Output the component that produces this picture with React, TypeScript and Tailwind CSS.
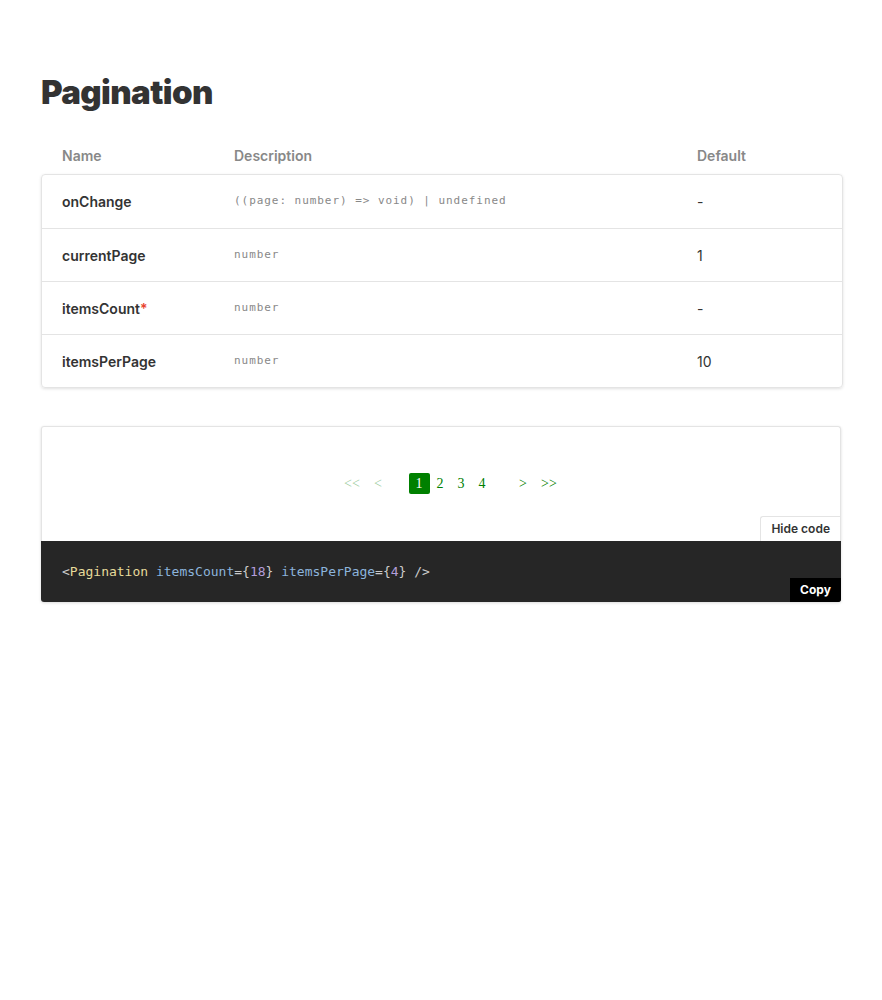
import React from "react";

const rows = [
  { name: "onChange", req: false, type: "((page: number) => void) | undefined", def: "-" },
  { name: "currentPage", req: false, type: "number", def: "1" },
  { name: "itemsCount", req: true, type: "number", def: "-" },
  { name: "itemsPerPage", req: false, type: "number", def: "10" },
];

const sans = "font-['Inter','Noto_Sans',sans-serif]";
const mono = "font-['DejaVu_Sans_Mono','Liberation_Mono',monospace]";

export default function App() {
  return (
    <div className={`min-h-[1000px] bg-white ${sans} text-[#333]`}>
      <div className="px-[41px] pt-[72px] w-[883px]">
        <h1 className="text-[33px] leading-[40px] font-black text-[#333] tracking-[-0.6px]">Pagination</h1>

        <div className="mt-[28px]">
          <div className="flex h-[30px] items-center text-[14px] font-semibold text-[#888] pl-[21px]">
            <div className="w-[172px]">Name</div>
            <div className="w-[463px]">Description</div>
            <div>Default</div>
          </div>
          <div className="mt-[4px] border border-[#e4e4e4] rounded-[4px] shadow-[0_1px_3px_rgba(0,0,0,0.12)] w-[802px]">
            {rows.map((r, i) => (
              <div
                key={r.name}
                className={`flex items-center h-[53px] pl-[20px] ${i > 0 ? "border-t border-[#e4e4e4]" : ""}`}
              >
                <div className="w-[172px] text-[14px] font-semibold text-[#333]">
                  {r.name}
                  {r.req && <span className="text-[#e8432d]">*</span>}
                </div>
                <div className={`w-[463px] ${mono} text-[11px] tracking-[0.95px] text-[#888]`}>{r.type}</div>
                <div className="text-[14px] text-[#333]">{r.def}</div>
              </div>
            ))}
          </div>
        </div>

        <div className="mt-[38px] w-[800px] rounded-[3px] shadow-[0_1px_3px_rgba(0,0,0,0.15)]">
          <div className="border border-[#e4e4e4] border-b-0 rounded-t-[3px] bg-white">
            <div className="flex justify-center pt-[46px] h-[89px] pl-[19px]">
              <div className="flex items-center h-[21px] font-['Liberation_Serif',serif] text-[14px] text-[#008000]">
                <span className="w-[21px] text-center opacity-40">&lt;&lt;</span>
                <span className="w-[21px] ml-[5px] text-center opacity-40">&lt;</span>
                <span className="w-[21px] h-[21px] ml-[20px] bg-[#008000] text-white rounded-[2px] flex items-center justify-center">1</span>
                <span className="w-[21px] text-center">2</span>
                <span className="w-[21px] text-center">3</span>
                <span className="w-[21px] text-center">4</span>
                <span className="w-[21px] ml-[20px] text-center">&gt;</span>
                <span className="w-[21px] ml-[5px] text-center">&gt;&gt;</span>
              </div>
            </div>
            <div className="flex justify-end h-[25px]">
              <div className="h-[25px] px-[10px] border border-[#e4e4e4] border-r-0 border-b-0 rounded-tl-[3px] text-[12px] font-semibold text-[#333] flex items-center bg-white">
                Hide code
              </div>
            </div>
          </div>
          <div className="bg-[#262626] rounded-b-[3px] h-[61px] flex items-end justify-between">
            <div className={`${mono} text-[13px] pl-[21px] self-center text-[#ccc]`}>
              <span>&lt;</span>
              <span className="text-[#e6db9b]">Pagination</span>{" "}
              <span className="text-[#8cb4dc]">itemsCount</span>
              <span>=&#123;</span>
              <span className="text-[#b39ddb]">18</span>
              <span>&#125;</span>{" "}
              <span className="text-[#8cb4dc]">itemsPerPage</span>
              <span>=&#123;</span>
              <span className="text-[#b39ddb]">4</span>
              <span>&#125; /&gt;</span>
            </div>
            <div className="bg-black text-white text-[12px] font-bold h-[24px] w-[51px] flex items-center justify-center rounded-br-[3px]">
              Copy
            </div>
          </div>
        </div>
      </div>
    </div>
  );
}
